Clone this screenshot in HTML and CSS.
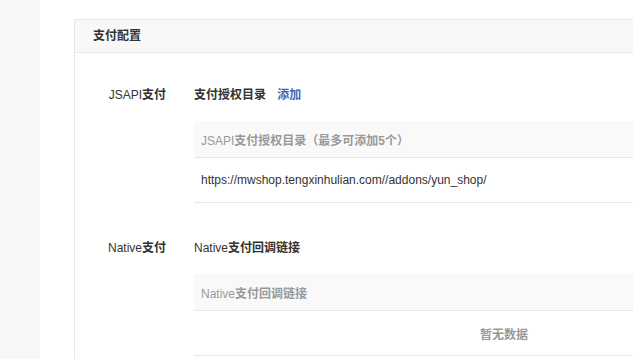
FILE: index.html
```html
<!DOCTYPE html>
<html>
<head>
<title>支付配置</title>
<meta name="viewport" content="width=device-width, initial-scale=1.0">
<link rel="stylesheet" href="styles.css">
</head>
<body>

<div class="page">
  <div class="side"></div>

  <div class="main">
    <div class="panel">
      <div class="panel-heading">支付配置</div>

      <div class="panel-body">
        <!-- JSAPI -->
        <div class="form-row">
          <div class="form-label"><span class="en">JSAPI</span>支付</div>
          <div class="form-field">
            <div class="field-title">支付授权目录 <a href="#" class="link-add">添加</a></div>
            <table class="list">
              <thead>
                <tr><th><span class="en">JSAPI</span>支付授权目录（最多可添加5个）</th></tr>
              </thead>
              <tbody>
                <tr><td>https://mwshop.tengxinhulian.com//addons/yun_shop/</td></tr>
              </tbody>
            </table>
          </div>
        </div>

        <!-- Native -->
        <div class="form-row">
          <div class="form-label"><span class="en">Native</span>支付</div>
          <div class="form-field">
            <div class="field-title"><span class="en">Native</span>支付回调链接</div>
            <table class="list">
              <thead>
                <tr><th><span class="en">Native</span>支付回调链接</th></tr>
              </thead>
              <tbody>
                <tr><td class="empty">暂无数据</td></tr>
              </tbody>
            </table>
          </div>
        </div>
      </div>
    </div>
  </div>
</div>

</body>
</html>
```

FILE: styles.css
```css
body {
  margin: 0;
  font-family: "Liberation Sans", Arial, "Noto Sans CJK SC", sans-serif;
  font-size: 12px;
  color: #333;
  background: #fff;
  overflow: hidden;
}
.page {
  display: flex;
  min-height: 359px;
}
.side {
  width: 40px;
  flex-shrink: 0;
  background: #f7f7f7;
}
.main {
  padding: 19px 0 0 34px;
}

/* 面板 */
.panel {
  width: 900px;
  border: 1px solid #e7e7e7;
  border-bottom: none;
  min-height: 400px;
}
.panel-heading {
  height: 32px;
  line-height: 32px;
  padding-left: 18px;
  background: #f8f8f8;
  border-bottom: 1px solid #e7e7e7;
  font-weight: bold;
}
.panel-body {
  padding-top: 32px;
}

/* 英文部分不加粗 */
.en {
  font-weight: normal;
}

.form-row {
  display: flex;
  margin-bottom: 35px;
}
.form-label {
  width: 91px;
  text-align: right;
  line-height: 20px;
  font-weight: bold;
  flex-shrink: 0;
}
.form-field {
  margin-left: 28px;
}
.field-title {
  line-height: 20px;
  font-weight: bold;
  margin-bottom: 16px;
}
.link-add {
  color: #4466b0;
  text-decoration: none;
  margin-left: 8px;
}

/* 表格 */
.list {
  width: 620px;
  border-collapse: collapse;
}
.list th {
  height: 36px;
  padding: 0 7px;
  text-align: left;
  color: #999;
  background: #f9f9f9;
  border-bottom: 1px solid #e7e7e7;
}
.list td {
  height: 44px;
  padding: 0 7px;
  border-bottom: 1px solid #e7e7e7;
}
.list td.empty {
  text-align: center;
  color: #999;
  font-weight: bold;
}
```
